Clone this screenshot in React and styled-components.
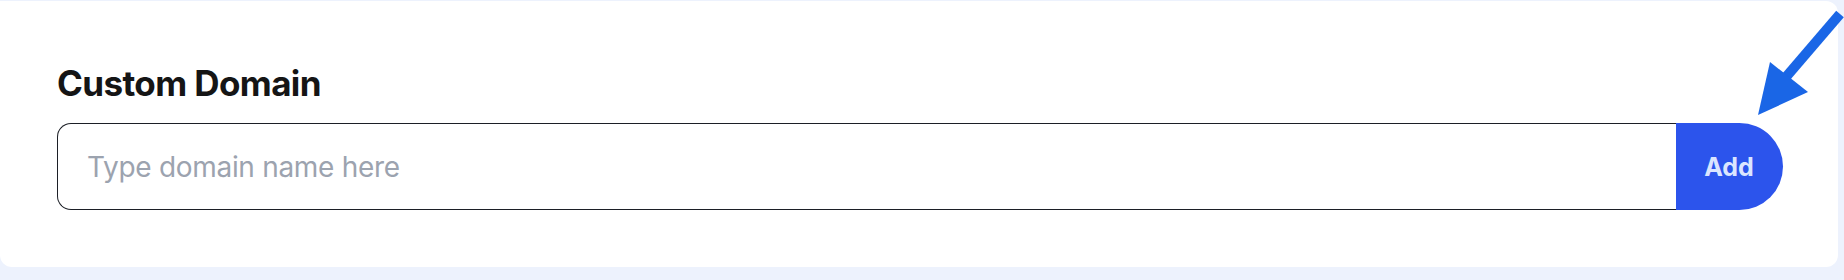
import React, { useState } from 'react';
import styled, { createGlobalStyle } from 'styled-components';

const GlobalStyle = createGlobalStyle`
	html, body {
		margin: 0;
		padding: 0;
		background: #edf2fd;
		font-family: Inter, 'Noto Sans', 'Liberation Sans', sans-serif;
	}
`;

const Page = styled.div`
	position: relative;
	width: 1844px;
	height: 280px;
	padding: 1px 6px 0 0;
	box-sizing: border-box;
	overflow: hidden;
`;

const Card = styled.section`
	background: #ffffff;
	border-radius: 0 12px 12px 12px;
	height: 266px;
	box-sizing: border-box;
	padding: 61px 55px 0 57px;
`;

const Title = styled.h2`
	margin: 0 0 18px;
	font-size: 35px;
	line-height: 1.24;
	font-weight: 700;
	color: #151515;
	letter-spacing: -0.6px;
`;

const Field = styled.form`
	display: flex;
	height: 87px;
`;

const Input = styled.input`
	flex: 1;
	min-width: 0;
	box-sizing: border-box;
	height: 100%;
	border: 1px solid #1c1f26;
	border-right: none;
	border-radius: 14px 0 0 14px;
	padding: 0 0 0 29px;
	font-family: inherit;
	font-size: 28px;
	letter-spacing: -0.3px;
	color: #111827;
	background: #fff;
	outline: none;
	&::placeholder {
		color: #9ca3af;
	}
`;

const AddButton = styled.button`
	all: unset;
	width: 107px;
	height: 100%;
	box-sizing: border-box;
	padding-right: 1px;
	background: #2c54ec;
	color: #dbe5ff;
	border-radius: 0 44px 44px 0;
	display: flex;
	align-items: center;
	justify-content: center;
	font-family: inherit;
	font-size: 25px;
	font-weight: 700;
	cursor: pointer;
`;

const Pointer = styled.svg`
	position: absolute;
	top: 0;
	left: 1740px;
	pointer-events: none;
`;

const App = () => {
	const [domain, setDomain] = useState('');
	return (
		<>
			<GlobalStyle />
			<Page>
				<Card>
					<Title>Custom Domain</Title>
					<Field onSubmit={(e) => e.preventDefault()}>
						<Input
							value={domain}
							onChange={(e) => setDomain(e.target.value)}
							placeholder='Type domain name here'
						/>
						<AddButton type='submit'>Add</AddButton>
					</Field>
				</Card>
				{/* annotation arrow pointing at the button */}
				<Pointer width='104' height='130' viewBox='0 0 104 130'>
					<line x1='100' y1='14' x2='46' y2='77' stroke='#1a66e6' strokeWidth='10' />
					<polygon points='18,115 30,62 68,92' fill='#1a66e6' />
				</Pointer>
			</Page>
		</>
	);
};

export default App;
